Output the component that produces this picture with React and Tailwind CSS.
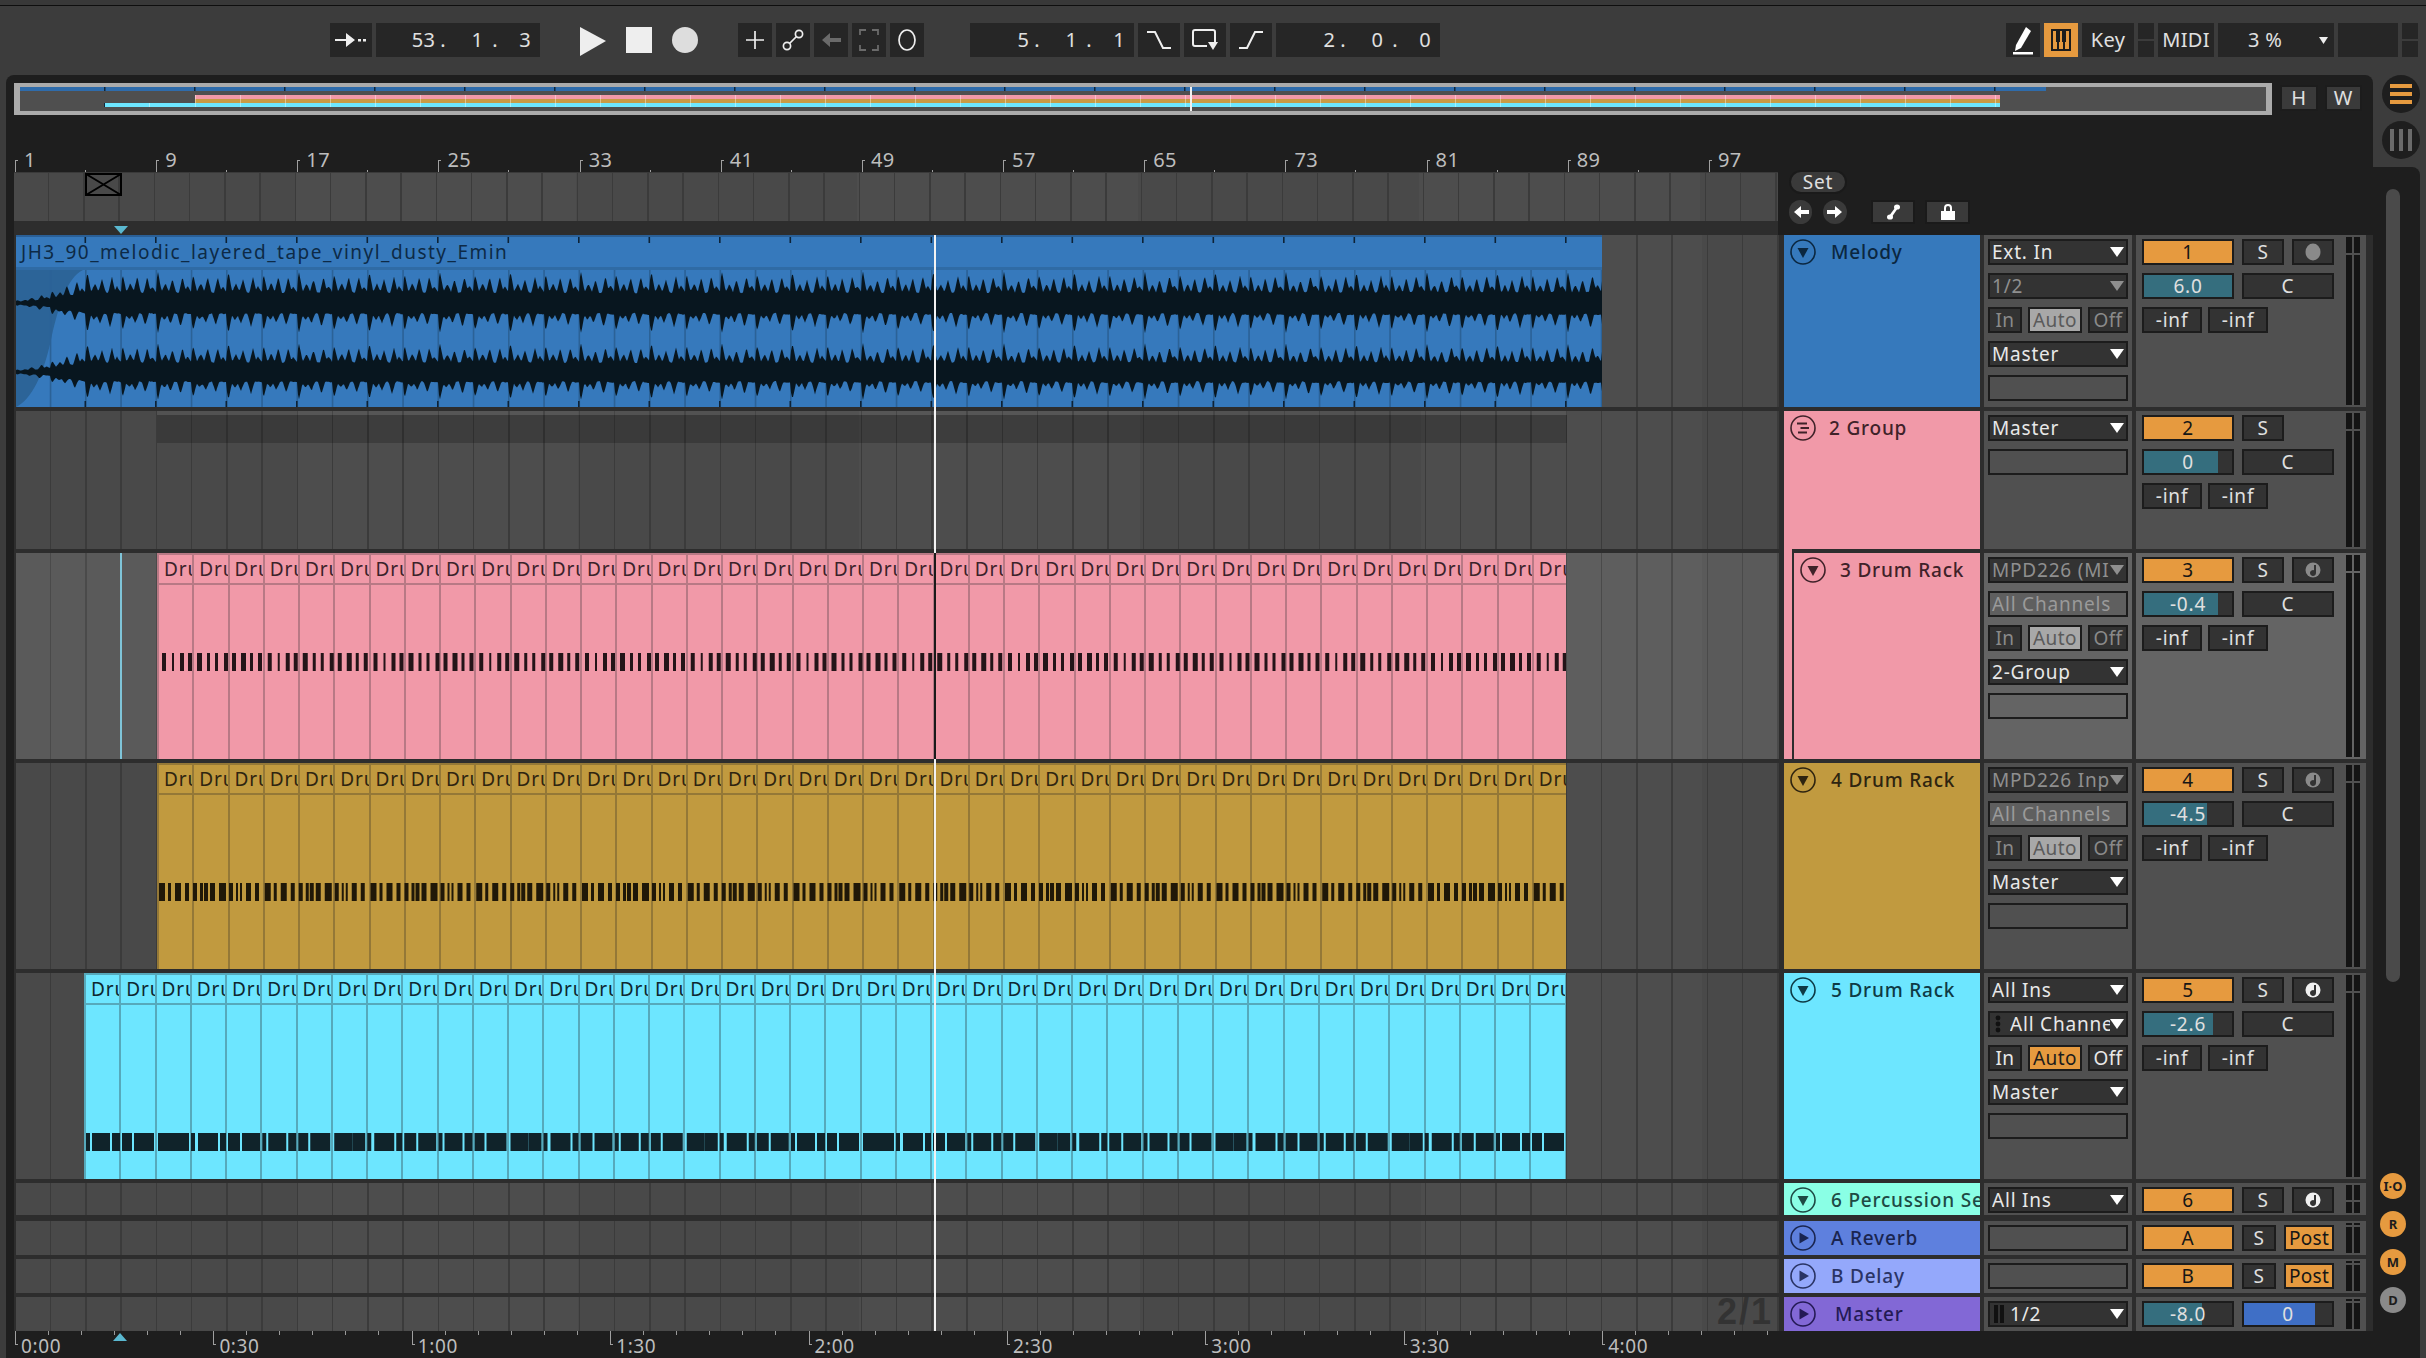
import React from "react";

const LANE = "bg-[image:repeating-linear-gradient(90deg,transparent_0,transparent_33.75px,#3b3b3b_33.75px,#3b3b3b_35.25px),repeating-linear-gradient(90deg,#494949_0,#494949_281px,#4d4d4d_281px,#4d4d4d_562px)]";
const LANE_LIGHT = "bg-[image:repeating-linear-gradient(90deg,transparent_0,transparent_33.75px,#4a4a4a_33.75px,#4a4a4a_35.25px),repeating-linear-gradient(90deg,#5a5a5a_0,#5a5a5a_281px,#5e5e5e_281px,#5e5e5e_562px)]";

const range = (n) => Array.from({ length: n }, (_, i) => i);

function Tri({ className = "fill-white" }) {
  return (
    <svg width="14" height="10" viewBox="0 0 14 10" className={"shrink-0 " + className}>
      <path d="M0 0H14L7 10Z" />
    </svg>
  );
}

function Select({ label, dim, icon }) {
  return (
    <div className="flex h-[26px] w-[140px] items-center overflow-hidden border-2 border-[#1c1c1c] bg-[#333333] pl-[2px] pr-[2px]">
      {icon === "dots" && (
        <svg width="18" height="20" viewBox="0 0 18 20" className="shrink-0 fill-[#111]">
          <circle cx="6" cy="4" r="2.4" /><circle cx="6" cy="10" r="2.4" /><circle cx="6" cy="16" r="2.4" />
        </svg>
      )}
      {icon === "ii" && (
        <svg width="18" height="20" viewBox="0 0 18 20" className="shrink-0 fill-[#111]">
          <rect x="2" y="1" width="4" height="18" /><rect x="8" y="1" width="4" height="18" />
        </svg>
      )}
      <span className={"min-w-0 flex-1 overflow-hidden whitespace-nowrap " + (dim ? "text-[#8f8f8f]" : "text-[#e8e8e8]")}>{label}</span>
      <Tri className={dim ? "fill-[#8f8f8f]" : "fill-white"} />
    </div>
  );
}

function Plain({ label, className = "" }) {
  return (
    <div className={"flex h-[26px] w-[140px] items-center overflow-hidden whitespace-nowrap border-2 border-[#1c1c1c] pl-[2px] " + className}>{label}</div>
  );
}

function InAutoOff({ active }) {
  const t = active ? "text-[#e8e8e8]" : "text-[#8a8a8a]";
  return (
    <div className="flex h-[26px] w-[140px] justify-between tracking-[0.4px]">
      <div className={"flex w-[34px] items-center justify-center border-2 border-[#1c1c1c] bg-[#333333] " + t}>In</div>
      <div className={"flex w-[54px] items-center justify-center border-2 border-[#1c1c1c] " + (active ? "bg-[#e69a3f] text-[#1c1c1c]" : "bg-[#a8a8a8] text-[#5a5a5a]")}>Auto</div>
      <div className={"flex w-[40px] items-center justify-center border-2 border-[#1c1c1c] bg-[#333333] " + t}>Off</div>
    </div>
  );
}

function Num({ v }) {
  return <div className="flex h-[26px] w-[92px] items-center justify-center border-2 border-[#1c1c1c] bg-[#e69a3f] text-[#161616]">{v}</div>;
}

function Btn({ v, className = "w-[42px]" }) {
  return <div className={"flex h-[26px] items-center justify-center border-2 border-[#1c1c1c] bg-[#333333] text-[#e0e0e0] " + className}>{v}</div>;
}

function Vol({ v, pct, fill = "bg-[#356e7e]", w = "w-[92px]" }) {
  return (
    <div className={"relative h-[26px] border-2 border-[#1c1c1c] bg-[#333333] " + w}>
      <div className={"h-full " + fill} style={{ width: pct + "%" }} />
      <span className="absolute inset-0 flex items-center justify-center text-[#e0e0e0]">{v}</span>
    </div>
  );
}

function ModeIcon({ kind, dim }) {
  const c = dim ? "#8a8a8a" : "#f0f0f0";
  if (kind === "rec") {
    return (
      <svg width="16" height="18" viewBox="0 0 16 18"><ellipse cx="8" cy="9" rx="7.5" ry="8.5" fill="#8a8a8a" /></svg>
    );
  }
  return (
    <svg width="16" height="16" viewBox="0 0 16 16">
      <circle cx="8" cy="8" r="7.5" fill={c} />
      <path d="M9 3h2v8a3 3 0 1 1-2-2.8Z" fill="#333333" />
    </svg>
  );
}

function Meter({ top = "h-[16px]" }) {
  return (
    <div className="ml-[12px] flex gap-[2px] py-[2px]">
      {[0, 1].map((i) => (
        <div key={i} className="flex w-[6px] flex-col gap-[2px]">
          <div className={"bg-[#141414] " + top} />
          <div className="flex-1 bg-[#141414]" />
        </div>
      ))}
    </div>
  );
}

function Arm({ n, kind, dim, vol, pct }) {
  return (
    <div className="flex flex-col gap-[8px]">
      <div className="flex gap-[8px]">
        <Num v={n} />
        <Btn v="S" />
        {kind && <Btn v={<ModeIcon kind={kind} dim={dim} />} />}
      </div>
      <div className="flex gap-[8px]">
        <Vol v={vol} pct={pct} />
        <Btn v="C" className="w-[92px]" />
      </div>
      <div className="flex gap-[6px]">
        <Btn v="-inf" className="w-[60px]" />
        <Btn v="-inf" className="w-[60px]" />
      </div>
    </div>
  );
}

function TrackIcon({ type }) {
  return (
    <svg width="26" height="26" viewBox="0 0 26 26" className="shrink-0 fill-none stroke-current">
      <circle cx="13" cy="13" r="12" strokeWidth="1.6" />
      {type === "down" && <path d="M7.5 9H18.5L13 19Z" className="fill-current stroke-none" />}
      {type === "right" && <path d="M9.5 7.5L19 13L9.5 18.5Z" className="fill-current stroke-none" />}
      {type === "group" && <path d="M7 8.5H17M10.5 13H19M8 17.5H17" strokeWidth="1.8" />}
    </svg>
  );
}

function Name({ label, type = "down", className, gap = "gap-[15px]" }) {
  return (
    <div className={"ml-[5px] flex w-[196px] items-start overflow-hidden whitespace-nowrap pl-[6px] pt-[4px] font-medium " + gap + " " + className}>
      <TrackIcon type={type} />
      <span className="leading-[26px]">{label}</span>
    </div>
  );
}

function hashNoise(x) {
  const s = Math.sin(x * 12.9898) * 43758.5453;
  return s - Math.floor(s);
}

function wavePath(c, s) {
  const P = 35.25;
  const up = [[1.5, 18], [9, 8], [16, 14], [26, 16], [31, 6]];
  const dn = [[1.5, 17], [8, 5], [14, 9], [24, 13]];
  const gain = (x) => (x < 35 ? 0.08 + (0.32 * x) / 35 : x < 70 ? 0.4 + (0.6 * (x - 35)) / 35 : 1);
  const amp = (x, set) => {
    const u = ((x + 0.5) % P + P) % P;
    let a = 10.5 + 0.8 * Math.sin(x * 0.18);
    let best = 0;
    for (const [o, A] of set) {
      const d = Math.abs(u - o);
      const vary = 1 + 0.08 * Math.sin(o + x * 0.0891);
      best = Math.max(best, A * vary * Math.max(0, 1 - d / 3.6));
    }
    a += best + 0.9 * hashNoise(Math.round(x));
    return a * gain(x) * s;
  };
  let top = "";
  let bot = "";
  const xs = [];
  for (let x = 0; x <= 1586; x += 1) xs.push(x);
  xs.forEach((x, i) => {
    top += (i ? "L" : "M") + x + " " + (c - amp(x, up)).toFixed(1);
  });
  xs.reverse().forEach((x) => {
    bot += "L" + x + " " + (c + amp(x, dn)).toFixed(1);
  });
  return top + bot + "Z";
}

const WAVE = wavePath(33, 1) + wavePath(102, 0.92);

function AudioClip() {
  return (
    <div className="flex h-full w-[1586px] flex-col bg-[#3679bc]">
      <div className="relative h-[32px] border-t-2 border-[#2a5f96]">
        <svg width="1586" height="8" className="absolute left-0 top-0">
          {range(22).map((i) => (
            <rect key={i} x={68.5 + i * 70.5} y="0" width="1.6" height="6" fill="#0d2236" />
          ))}
        </svg>
        <span className="absolute left-[5px] top-[2px] whitespace-nowrap leading-[26px] tracking-[1.48px] text-[#0d2a46]">JH3_90_melodic_layered_tape_vinyl_dusty_Emin</span>
      </div>
      <div className="h-[3px] bg-[#2f6ba5]" />
      <svg width="1586" height="137" className="block">
        <path d="M0 0H67C50 8 42 40 36 65C28 105 15 130 0 137Z" fill="#2c6498" />
        {range(45).map((i) => (
          <rect key={i} x={33.75 + i * 35.25} y="0" width="1.6" height="137" fill="#2b6297" />
        ))}
        <path d={WAVE} fill="#08161f" />
        {range(22).map((i) => (
          <rect key={i} x={68.5 + i * 70.5} y="131" width="1.6" height="6" fill="#0d2236" />
        ))}
      </svg>
    </div>
  );
}

const PINK_NOTES = [[0, 4], [10, 2], [18, 4], [26, 4], [35, 5], [45, 3], [53, 3], [62, 4], [70, 4], [79, 5], [88, 3], [96, 4]];
const GOLD_NOTES = [[0, 6], [9, 3], [16, 6], [26, 4], [34, 4], [41, 3], [45, 4], [51, 5], [60, 7], [70, 4], [77, 2], [81, 2], [87, 5], [96, 4]];
const CYAN_NOTES = [[0, 4], [6, 18], [26, 8], [36, 10], [48, 20], [72, 18], [90, 13], [105, 4], [112, 20], [134, 6], [142, 12], [156, 18]];

function Notes({ width, notes, period, start, fill }) {
  const reps = Math.ceil(width / period);
  return (
    <svg width={width} height="18" className="block">
      {range(reps).map((r) =>
        notes.map(([x, w], i) => (
          <rect key={r + "-" + i} x={start + r * period + x} y="0" width={w} height="18" fill={fill} />
        ))
      )}
    </svg>
  );
}

function MidiClip({ count, widthClass, bg, titleLine, bodyClass, text, notes, period, start, noteFill, notesTop, width }) {
  return (
    <div className={"flex h-full flex-col overflow-hidden border-l-2 border-t-2 " + widthClass + " " + bg + " " + titleLine}>
      <div className={"flex h-[30px] shrink-0 border-b-2 " + titleLine + " " + text}>
        {range(count).map((i) => (
          <div key={i} className={"h-full w-[35.25px] shrink-0 overflow-hidden whitespace-nowrap border-r-2 pl-[5px] leading-[28px] tracking-[0.9px] " + titleLine}>Drum</div>
        ))}
      </div>
      <div className={"min-h-0 flex-1 " + bodyClass + " " + notesTop}>
        <Notes width={width} notes={notes} period={period} start={start} fill={noteFill} />
      </div>
    </div>
  );
}

const PINK_BODY = "bg-[image:repeating-linear-gradient(90deg,transparent_0,transparent_33.25px,#b87985_33.25px,#b87985_35.25px)]";
const GOLD_BODY = "bg-[image:repeating-linear-gradient(90deg,transparent_0,transparent_33.25px,#947837_33.25px,#947837_35.25px)]";
const CYAN_BODY = "bg-[image:repeating-linear-gradient(90deg,transparent_0,transparent_33.25px,#56a9bb_33.25px,#56a9bb_35.25px)]";

function Row({ h, lane, laneChildren, name, mix1, mix2, top, mt = "mt-[4px]", mix1Bg = "bg-[#505050]", mix2Bg = "bg-[#505050]" }) {
  return (
    <div className={"flex " + h + " " + mt}>
      <div className={"relative w-[1765px] shrink-0 overflow-hidden border-l-2 border-[#2d2d2d] " + lane}>{laneChildren}</div>
      {name}
      <div className={"ml-[4px] flex w-[148px] shrink-0 flex-col gap-[8px] pl-[4px] pt-[4px] " + mix1Bg}>{mix1}</div>
      <div className={"ml-[4px] flex w-[230px] shrink-0 pl-[6px] pt-[4px] " + mix2Bg}>
        <div className="w-[192px]">{mix2}</div>
        <div className="-mt-[4px] flex"><Meter top={top} /></div>
      </div>
    </div>
  );
}

function Tb({ className = "w-[34px]", children }) {
  return <div className={"flex h-[34px] shrink-0 items-center justify-center bg-[#262626] text-[#e0e0e0] " + className}>{children}</div>;
}

function Position({ a, b, c }) {
  return (
    <Tb className="w-[164px] justify-end pr-[9px]">
      <span className="w-[60px] text-right">{a}<span className="ml-[5px]">.</span></span>
      <span className="w-[52px] text-right">{b}<span className="ml-[9px]">.</span></span>
      <span className="w-[33px] text-right">{c}</span>
    </Tb>
  );
}

function Split({ className }) {
  return (
    <div className={"flex h-[34px] shrink-0 flex-col gap-[2px] " + className}>
      <div className="h-[16px] bg-[#262626]" />
      <div className="h-[16px] bg-[#262626]" />
    </div>
  );
}

function Transport() {
  return (
    <div className="flex h-[69px] items-start pl-[330px] pt-[17px] text-[20px] leading-none tracking-[0.3px]">
      <Tb className="w-[42px]">
        <svg width="32" height="20" viewBox="0 0 32 20" className="fill-[#eee]"><path d="M0 9H11V3L20 10L11 17V11H0Z" /><rect x="23" y="9" width="3" height="2.5" /><rect x="28" y="9" width="3" height="2.5" /></svg>
      </Tb>
      <div className="ml-[4px]"><Position a="53" b="1" c="3" /></div>
      <svg width="26" height="34" viewBox="0 0 26 34" className="ml-[40px] fill-[#eeeeee]"><path d="M0 4L26 18L0 33Z" /></svg>
      <div className="ml-[20px] mt-[4px] h-[26px] w-[26px] bg-[#eeeeee]" />
      <div className="ml-[20px] mt-[4px] h-[26px] w-[26px] rounded-full bg-[#dddddd]" />
      <div className="ml-[40px] flex gap-[4px]">
        <Tb>
          <svg width="20" height="20" viewBox="0 0 20 20" className="stroke-[#eee]" strokeWidth="1.7"><path d="M10 1V19M1 10H19" /></svg>
        </Tb>
        <Tb>
          <svg width="24" height="24" viewBox="0 0 24 24" className="fill-none stroke-[#eee]" strokeWidth="1.7"><circle cx="6" cy="18" r="3.6" /><circle cx="18" cy="6" r="3.6" /><path d="M8.5 15.5L15.5 8.5" /></svg>
        </Tb>
        <Tb>
          <svg width="20" height="18" viewBox="0 0 20 18" className="fill-[#6a6a6a]"><path d="M20 7H9V2L1 9L9 16V11H20Z" /></svg>
        </Tb>
        <Tb>
          <svg width="20" height="22" viewBox="0 0 20 22" className="fill-none stroke-[#6a6a6a]" strokeWidth="1.8"><path d="M1 6V1H7M13 1H19V6M19 16V21H13M7 21H1V16" /></svg>
        </Tb>
        <Tb>
          <svg width="20" height="24" viewBox="0 0 20 24" className="fill-none stroke-[#eee]" strokeWidth="1.7"><ellipse cx="10" cy="12" rx="8" ry="10" /></svg>
        </Tb>
      </div>
      <div className="ml-[46px] flex gap-[4px]">
        <Position a="5" b="1" c="1" />
        <Tb className="w-[42px]">
          <svg width="28" height="24" viewBox="0 0 28 24" className="fill-none stroke-[#eee]" strokeWidth="2"><path d="M2 4H10L18 20H26" /></svg>
        </Tb>
        <Tb className="w-[42px]">
          <svg width="28" height="26" viewBox="0 0 28 26" className="fill-none stroke-[#eee]" strokeWidth="2"><path d="M16 19H4Q2 19 2 17V5Q2 3 4 3H22Q24 3 24 5V15" /><path d="M17 15H27L22 23Z" className="fill-[#eee] stroke-none" /></svg>
        </Tb>
        <Tb className="w-[42px]">
          <svg width="28" height="24" viewBox="0 0 28 24" className="fill-none stroke-[#eee]" strokeWidth="2"><path d="M2 20H10L18 4H26" /></svg>
        </Tb>
        <Position a="2" b="0" c="0" />
      </div>
      <div className="ml-[566px] flex gap-[4px]">
        <Tb>
          <svg width="20" height="30" viewBox="0 0 20 30" className="fill-white"><path d="M13 2L18 6L8 23L2 26L3 20Z" /><rect x="0" y="27" width="20" height="2.5" /></svg>
        </Tb>
        <Tb className="w-[34px] bg-[#e69a3f]">
          <svg width="22" height="24" viewBox="0 0 22 24">
            <rect x="1" y="1" width="20" height="22" fill="#1c1c1c" />
            <rect x="3" y="3" width="4" height="18" fill="#e69a3f" /><rect x="9" y="3" width="4" height="18" fill="#e69a3f" /><rect x="15" y="3" width="4" height="18" fill="#e69a3f" />
            <rect x="6" y="3" width="4" height="11" fill="#1c1c1c" /><rect x="12" y="3" width="4" height="11" fill="#1c1c1c" />
          </svg>
        </Tb>
        <Tb className="w-[52px]">Key</Tb>
        <Split className="w-[16px]" />
        <Tb className="w-[56px]">MIDI</Tb>
        <Tb className="w-[116px] justify-start pl-[30px]">
          <span className="w-[45px] whitespace-nowrap">3 %</span>
          <svg width="9" height="7" viewBox="0 0 9 7" className="ml-[26px] fill-[#eee]"><path d="M0 0H9L4.5 7Z" /></svg>
        </Tb>
        <Tb className="w-[60px]" />
        <Split className="w-[16px]" />
      </div>
    </div>
  );
}

function Overview() {
  const W = 2246;
  return (
    <div className="flex items-start">
      <div className="mt-[8px] h-[32px] w-[2258px] border-x-[6px] border-y-4 border-[#ababab] bg-[#4f4f4f]">
        <svg width={W} height="24" className="block">
          <rect x="0" y="0" width="2026" height="4" fill="#2f6cab" />
          <rect x="175" y="8" width="1805" height="4" fill="#f199a8" />
          <rect x="175" y="12" width="1805" height="4" fill="#c99a45" />
          <rect x="84" y="16" width="1896" height="4" fill="#6de6ff" />
          {range(22).map((i) => (
            <rect key={"t" + i} x={84 + i * 90} y="0" width="1.5" height="4" fill="#10263a" />
          ))}
          {range(41).map((i) => (
            <rect key={"u" + i} x={175 + i * 45} y="8" width="1" height="12" fill="#fff" opacity="0.4" />
          ))}
          <rect x="84" y="16" width="1" height="4" fill="#10263a" />
          <rect x="129" y="16" width="1" height="4" fill="#fff" opacity="0.4" />
          <rect x="1170" y="0" width="2" height="24" fill="#f0f0f0" />
        </svg>
      </div>
      <div className="ml-[8px] mt-[10px] flex gap-[7px] text-[20px]">
        <div className="flex h-[26px] w-[38px] items-center justify-center border-2 border-[#1c1c1c] bg-[#3a3a3a] text-[#e0e0e0]">H</div>
        <div className="flex h-[26px] w-[37px] items-center justify-center border-2 border-[#1c1c1c] bg-[#3a3a3a] text-[#e0e0e0]">W</div>
      </div>
    </div>
  );
}

function RulerTop() {
  const labels = [1, 9, 17, 25, 33, 41, 49, 57, 65, 73, 81, 89, 97];
  return (
    <div className="flex h-[22px] w-[1764px] overflow-hidden pl-[1px] text-[20px] leading-[20px] tracking-[0.4px] text-[#bdbdbd]">
      {labels.map((l) => (
        <div key={l} className="relative h-[22px] w-[141.17px] shrink-0 pl-[9px]">
          <div className="absolute bottom-0 left-0 h-[12px] w-[3px] border-l border-t border-[#a0a0a0]" />
          <div className="absolute bottom-0 left-[70px] h-[2px] w-[1px] bg-[#a0a0a0]" />
          {l}
        </div>
      ))}
    </div>
  );
}

function HeaderRight() {
  return (
    <div className="ml-[11px] pt-[20px]">
      <div className="flex h-[24px] w-[58px] items-center justify-center rounded-full border-2 border-[#1a1a1a] bg-[#3a3a3a] text-[#e0e0e0]">Set</div>
      <div className="mt-[6px] flex h-[24px] items-center">
        <div className="flex h-[24px] w-[23px] items-center justify-center rounded-full bg-[#3a3a3a]">
          <svg width="16" height="14" viewBox="0 0 16 14" className="fill-white"><path d="M16 5H8V1L1 7L8 13V9H16Z" /></svg>
        </div>
        <div className="ml-[11px] flex h-[24px] w-[24px] items-center justify-center rounded-full bg-[#3a3a3a]">
          <svg width="16" height="14" viewBox="0 0 16 14" className="fill-white"><path d="M0 5H8V1L15 7L8 13V9H0Z" /></svg>
        </div>
        <div className="ml-[24px] flex h-[24px] w-[44px] items-center justify-center border-2 border-[#1a1a1a] bg-[#3a3a3a]">
          <svg width="14" height="16" viewBox="0 0 14 16" className="fill-white"><ellipse cx="4" cy="13" rx="3" ry="2.6" /><ellipse cx="11" cy="3" rx="3" ry="2.6" /><path d="M3 12L10 2.5L12 4L5.5 13.5Z" /></svg>
        </div>
        <div className="ml-[10px] flex h-[24px] w-[45px] items-center justify-center border-2 border-[#1a1a1a] bg-[#3a3a3a]">
          <svg width="14" height="16" viewBox="0 0 14 16" className="fill-white"><rect x="0" y="7" width="14" height="9" /><path d="M3 8V4a4 4 0 0 1 8 0V8H9V4a2 2 0 0 0-4 0V8Z" /></svg>
        </div>
      </div>
    </div>
  );
}

function Header() {
  return (
    <div className="mt-[35px] flex h-[85px]">
      <div className="w-[1764px]">
        <RulerTop />
        <div className="flex h-[49px] flex-col bg-[#3a3a3a] pt-px">
          <div className={"h-[48px] pl-[71px] pt-0 " + LANE}>
            <svg width="37" height="23" viewBox="0 0 37 23" className="block fill-none stroke-black" strokeWidth="2">
              <rect x="1" y="1" width="35" height="21" />
              <path d="M1 1L36 22M36 1L1 22" />
            </svg>
          </div>
        </div>
        <div className="flex h-[14px] items-end bg-[#2d2d2d] pl-[100px]">
          <svg width="14" height="8" viewBox="0 0 14 8" className="mb-px block fill-[#5ab8d0]"><path d="M0 0H14L7 8Z" /></svg>
        </div>
      </div>
      <HeaderRight />
    </div>
  );
}

function RulerBottom() {
  const labels = ["0:00", "0:30", "1:00", "1:30", "2:00", "2:30", "3:00", "3:30", "4:00"];
  return (
    <div className="relative flex h-[27px] w-[1765px] overflow-hidden pl-[1px] text-[19px] leading-none tracking-[0.6px] text-[#bdbdbd]">
      {labels.map((l) => (
        <div key={l} className="relative h-[27px] w-[198.4px] shrink-0 pl-[6px] pt-[6px]">
          <div className="absolute left-0 top-0 flex">
            {range(6).map((i) => (
              <div key={i} className="h-[4px] w-[33px] border-l border-[#9a9a9a]" />
            ))}
          </div>
          <div className="absolute left-0 top-0 h-[14px] w-[3px] border-b border-l border-[#a0a0a0]" />
          {l}
        </div>
      ))}
      <svg width="14" height="8" viewBox="0 0 14 8" className="absolute left-[99px] top-[2px] fill-[#5ab8d0]"><path d="M0 8H14L7 0Z" /></svg>
    </div>
  );
}

function Tracks() {
  return (
    <div className="relative">
      <Row
        h="h-[172px]" mt="mt-0" lane={LANE}
        laneChildren={<AudioClip />}
        name={<Name label="Melody" className="bg-[#3679bc] text-[#0b2740]" />}
        mix1={<>
          <Select label="Ext. In" />
          <Select label="1/2" dim />
          <InAutoOff />
          <Select label="Master" />
          <Plain label="" />
        </>}
        mix2={<Arm n="1" kind="rec" vol="6.0" pct={100} />}
      />
      <Row
        h="h-[138px]" lane={LANE}
        laneChildren={
          <div className="ml-[141px] w-[1410px]">
            <div className="h-[4px] bg-white/5" />
            <div className="h-[28px] bg-black/20" />
          </div>
        }
        name={<Name label="2 Group" type="group" gap="gap-[13px]" className="bg-[#f199a8] text-[#3f2229]" />}
        mix1={<>
          <Select label="Master" />
          <Plain label="" />
        </>}
        mix2={<Arm n="2" vol="0" pct={84} />}
      />
      <Row
        h="h-[206px]" lane={LANE_LIGHT} mix1Bg="bg-[#646464]" mix2Bg="bg-[#646464]"
        laneChildren={<>
          <div className="ml-[141px] h-full">
            <MidiClip count={40} width={1407} widthClass="w-[1409px]" bg="bg-[#f199a8]" titleLine="border-[#b87985]" text="text-[#3a222a]" bodyClass={PINK_BODY} notesTop="pt-[68px]" notes={PINK_NOTES} period={105.75} start={3} noteFill="#241418" />
          </div>
          <div className="absolute left-[104px] top-0 h-full w-[2px] bg-[#7fc4d8]" />
        </>}
        name={
          <div className="ml-[5px] -mt-[4px] h-[210px] w-[196px] shrink-0 bg-[#f199a8] pl-[8px] text-[#3f2229]">
            <div className="flex h-full items-start gap-[14px] whitespace-nowrap border-l-2 border-t-4 border-[#2d2d2d] pl-[6px] pt-[4px] font-medium">
              <TrackIcon type="down" />
              <span className="leading-[26px]">3 Drum Rack</span>
            </div>
          </div>
        }
        mix1={<>
          <Select label="MPD226 (MIDI)" dim />
          <Plain label="All Channels" className="bg-[#5f5f5f] text-[#9a9a9a]" />
          <InAutoOff />
          <Select label="2-Group" />
          <Plain label="" />
        </>}
        mix2={<Arm n="3" kind="note" dim vol="-0.4" pct={84} />}
      />
      <Row
        h="h-[206px]" lane={LANE}
        laneChildren={
          <div className="ml-[141px] h-full">
            <MidiClip count={40} width={1407} widthClass="w-[1409px]" bg="bg-[#c19a3f]" titleLine="border-[#947837]" text="text-[#2e2410]" bodyClass={GOLD_BODY} notesTop="pt-[88px]" notes={GOLD_NOTES} period={105.75} start={0} noteFill="#201808" />
          </div>
        }
        name={<Name label="4 Drum Rack" className="bg-[#c19a3f] text-[#2e2410]" />}
        mix1={<>
          <Select label="MPD226 Input" dim />
          <Plain label="All Channels" className="bg-[#5f5f5f] text-[#9a9a9a]" />
          <InAutoOff />
          <Select label="Master" />
          <Plain label="" />
        </>}
        mix2={<Arm n="4" kind="note" dim vol="-4.5" pct={72} />}
      />
      <Row
        h="h-[206px]" lane={LANE}
        laneChildren={
          <div className="ml-[68px] h-full">
            <MidiClip count={42} width={1480} widthClass="w-[1482px]" bg="bg-[#6de6ff]" titleLine="border-[#56a9bb]" text="text-[#0e2730]" bodyClass={CYAN_BODY} notesTop="pt-[128px]" notes={CYAN_NOTES} period={176.25} start={0} noteFill="#10232a" />
          </div>
        }
        name={<Name label="5 Drum Rack" className="bg-[#6de6ff] text-[#0e3a45]" />}
        mix1={<>
          <Select label="All Ins" />
          <Select label="All Channels" icon="dots" />
          <InAutoOff active />
          <Select label="Master" />
          <Plain label="" />
        </>}
        mix2={<Arm n="5" kind="note" vol="-2.6" pct={78} />}
      />
      <Row
        h="h-[32px]" lane={LANE} top="h-[15px]"
        name={<Name label="6 Percussion Section" className="bg-[#8affe5] text-[#1e4a44]" />}
        mix1={<Select label="All Ins" />}
        mix2={
          <div className="flex gap-[8px]">
            <Num v="6" /><Btn v="S" /><Btn v={<ModeIcon kind="note" />} />
          </div>
        }
      />
      <Row
        h="h-[34px]" mt="mt-[6px]" lane={LANE} top="h-[2px]"
        name={<Name label="A Reverb" type="right" className="bg-[#5e80de] text-[#1a2550]" />}
        mix1={<Plain label="" />}
        mix2={
          <div className="flex gap-[8px]">
            <Num v="A" />
            <Btn v="S" className="w-[34px]" />
            <div className="flex h-[26px] w-[50px] items-center justify-center overflow-hidden border-2 border-[#1c1c1c] bg-[#e69a3f] tracking-[0.3px] text-[#161616]">Post</div>
          </div>
        }
      />
      <Row
        h="h-[34px]" lane={LANE} top="h-[2px]"
        name={<Name label="B Delay" type="right" className="bg-[#94a8fb] text-[#2a3465]" />}
        mix1={<Plain label="" />}
        mix2={
          <div className="flex gap-[8px]">
            <Num v="B" />
            <Btn v="S" className="w-[34px]" />
            <div className="flex h-[26px] w-[50px] items-center justify-center overflow-hidden border-2 border-[#1c1c1c] bg-[#e69a3f] tracking-[0.3px] text-[#161616]">Post</div>
          </div>
        }
      />
      <Row
        h="h-[34px]" lane={LANE} top="h-[2px]"
        laneChildren={<span className="absolute right-[6px] top-[-4px] font-['Liberation_Sans',sans-serif] text-[36px] font-bold leading-[38px] tracking-[2px] text-[#333333]">2/1</span>}
        name={<Name label="Master" type="right" gap="gap-[19px]" className="bg-[#8268d6] text-[#241a55]" />}
        mix1={<Select label="1/2" icon="ii" />}
        mix2={
          <div className="flex gap-[8px]">
            <Vol v="-8.0" pct={66} />
            <Vol v="0" pct={81} fill="bg-[#3f6fc6]" />
          </div>
        }
      />
      <div className="absolute left-[920px] top-0 h-full w-[2px] bg-[#f2f2f2]" />
      <div className="absolute left-[920px] top-[318px] h-[206px] w-[2px] bg-[#1a1a1a]" />
    </div>
  );
}

function SideColumn() {
  return (
    <div className="flex w-[53px] flex-col">
      <div className="h-[92px] shrink-0 pl-[9px]">
        <div className="flex h-[38px] w-[38px] flex-col items-center justify-center gap-[4px] rounded-full bg-[#1e1e1e]">
          <div className="h-[4px] w-[22px] bg-[#e69a3f]" />
          <div className="h-[4px] w-[22px] bg-[#e69a3f]" />
          <div className="h-[4px] w-[22px] bg-[#e69a3f]" />
        </div>
        <div className="mt-[8px] flex h-[38px] w-[38px] items-center justify-center gap-[5px] rounded-full bg-[#1e1e1e]">
          <div className="h-[22px] w-[4px] bg-[#6a6a6a]" />
          <div className="h-[22px] w-[4px] bg-[#6a6a6a]" />
          <div className="h-[22px] w-[4px] bg-[#6a6a6a]" />
        </div>
      </div>
      <div className="mr-[6px] min-h-0 flex-1 rounded-tr-lg bg-[#1e1e1e] pl-[7px] pt-[22px]">
        <div className="ml-[6px] h-[793px] w-[14px] rounded-full bg-[#4a4a4a]" />
        <div className="mt-[191px] flex w-[26px] flex-col gap-[12px] text-[13px] font-bold leading-none tracking-normal text-[#1c1c1c] [&>div]:h-[26px]">
          <div className="flex items-center justify-center rounded-full bg-[#e69a3f]">I·O</div>
          <div className="flex items-center justify-center rounded-full bg-[#e69a3f]">R</div>
          <div className="flex items-center justify-center rounded-full bg-[#e69a3f]">M</div>
          <div className="flex items-center justify-center rounded-full bg-[#8a8a8a]">D</div>
        </div>
      </div>
    </div>
  );
}

export default function App() {
  return (
    <div className="h-[1358px] w-[2426px] overflow-hidden bg-[#3c3c3c] font-['Noto_Sans',sans-serif] text-[19px] tracking-[0.8px]">
      <div className="h-[5px] bg-[#383838]" />
      <div className="h-px bg-[#0e0e0e]" />
      <Transport />
      <div className="flex h-[1283px]">
        <div className="ml-[6px] flex w-[2367px] shrink-0 flex-col rounded-t-lg bg-[#1e1e1e] pl-[8px]">
          <Overview />
          <Header />
          <div className="bg-[#2d2d2d]">
            <Tracks />
          </div>
          <RulerBottom />
        </div>
        <SideColumn />
      </div>
    </div>
  );
}
